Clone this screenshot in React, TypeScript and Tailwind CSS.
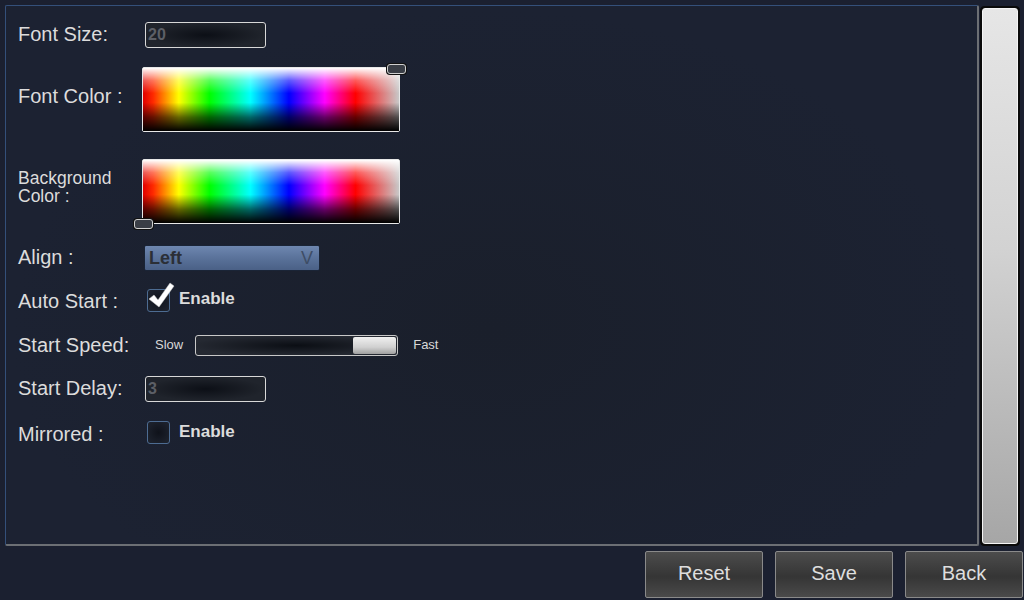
import React from 'react';

const hue =
  'bg-[linear-gradient(to_right,#e00000_0%,#ff2a00_4%,#ffff00_14%,#00ff00_26%,#00ffff_42%,#0000ff_57%,#ff00ff_71%,#ff0000_83%,#c8c8c8_100%)]';
const shade =
  'bg-[linear-gradient(to_bottom,#ffffff_0%,rgba(255,255,255,0.35)_20%,rgba(255,255,255,0)_40%,rgba(0,0,0,0)_55%,rgba(0,0,0,0.6)_78%,#000000_100%)]';

const Label = ({ children, className = 'text-[20px] leading-none' }: { children: React.ReactNode; className?: string }) => (
  <div className={`w-[124px] shrink-0 text-[#dcdcdc] ${className}`}>{children}</div>
);

const TextBox = ({ value }: { value: string }) => (
  <div className="ml-[3px] w-[121px] h-[26px] rounded-[3px] border border-[#d8d8d8] bg-[radial-gradient(ellipse_at_center,#0c0f16_0%,#20242c_70%)] flex items-center px-[2px]">
    <span className="text-[16px] font-bold text-[#5c5f66]">{value}</span>
  </div>
);

const Thumb = ({ className }: { className: string }) => (
  <div className={`absolute w-[19px] h-[10px] rounded-[3px] border border-[#d0d0d0] bg-[#3a3e46] shadow-[0_0_0_1px_#111] ${className}`} />
);

const Picker = ({ thumb }: { thumb: string }) => (
  <div className="relative w-[258px] h-[65px]">
    <div className={`w-full h-full border border-[#e8e8e8] rounded-[2px] ${hue}`}>
      <div className={`w-full h-full ${shade}`} />
    </div>
    <Thumb className={thumb} />
  </div>
);

const Check = ({ checked }: { checked: boolean }) => (
  <div className="relative ml-[5px] w-[23px] h-[23px] rounded-[3px] border border-[#4d6c92] bg-[radial-gradient(circle,#0f121a_0%,#1c212c_80%)]">
    {checked && (
      <svg className="absolute -top-[9px] -left-[1px]" width="28" height="30" viewBox="0 0 28 30">
        <path d="M2 18 L7 14 L11 19 L23 2 L27 5 L12 26 Z" fill="#ffffff" stroke="#cfcfcf" strokeWidth="0.5" />
      </svg>
    )}
  </div>
);

const Btn = ({ children }: { children: React.ReactNode }) => (
  <div className="w-[118px] h-[47px] pb-[3px] rounded-[2px] border border-[#8a8a8a] bg-[linear-gradient(to_bottom,#4c4c4c_0%,#353535_55%,#4a4a4a_100%)] flex items-center justify-center text-[20px] text-[#dedede]">
    {children}
  </div>
);

export default function App() {
  return (
    <div className="w-[1024px] h-[600px] bg-[#1b2030] font-['Liberation_Sans',Arial,sans-serif] overflow-hidden flex flex-col">
      <div className="flex pt-[5px] pl-[5px] h-[546px]">
        <div className="w-[974px] h-[541px] rounded-[2px] border-t border-l border-t-[#34507a] border-l-[#34507a] border-b-2 border-r-2 border-b-[#6c6f74] border-r-[#6c6f74] bg-[radial-gradient(ellipse_at_50%_60%,#1a1f2b_0%,#1c2232_70%)] pl-[12px] flex flex-col">
          {/* Font size */}
          <div className="mt-[14px] h-[30px] flex items-center">
            <Label className="text-[20px] leading-none -mt-[2px]">Font Size:</Label>
            <TextBox value="20" />
          </div>

          {/* Font color */}
          <div className="mt-[17px] h-[65px] flex items-center">
            <Label className="text-[20px] leading-none -mt-[8px]">Font Color :</Label>
            <Picker thumb="-top-[3px] right-[-6px]" />
          </div>

          {/* Background color */}
          <div className="mt-[26px] h-[66px] flex items-center">
            <Label className="text-[17.5px] leading-[18px] -mt-[8px]">
              Background
              <br />
              Color :
            </Label>
            <Picker thumb="-bottom-[5px] -left-[8px]" />
          </div>

          {/* Align */}
          <div className="mt-[21px] h-[26px] flex items-center">
            <Label className="text-[20px] leading-none -mt-[3px]">Align :</Label>
            <div className="ml-[2px] w-[176px] h-[26px] rounded-[2px] border border-[#1a2436] bg-[linear-gradient(to_bottom,#6e87b0_0%,#5a729a_50%,#4a6086_100%)] flex items-center justify-between px-[4px]">
              <span className="text-[18px] font-bold text-[#2b2f36]">Left</span>
              <span className="text-[18px] text-[#3e4d66] mr-[2px]">V</span>
            </div>
          </div>

          {/* Auto start */}
          <div className="mt-[17px] h-[24px] flex items-center">
            <Label className="text-[20px] leading-none mt-[2px]">Auto Start :</Label>
            <Check checked />
            <span className="ml-[9px] text-[17px] font-bold text-[#dcdcdc] -mt-[2px]">Enable</span>
          </div>

          {/* Start speed */}
          <div className="mt-[22px] h-[22px] flex items-center">
            <Label>Start Speed:</Label>
            <span className="ml-[13px] text-[13px] text-[#d8d8d8]">Slow</span>
            <div className="ml-[12px] w-[203px] h-[21px] rounded-[3px] border border-[#c8c8c8] bg-[radial-gradient(ellipse_at_center,#0b0e14_0%,#252932_75%)] flex justify-end p-[1px]">
              <div className="w-[43px] h-full rounded-[2px] bg-[linear-gradient(to_bottom,#f0f0f0_0%,#d0d0d0_60%,#a0a0a0_100%)]" />
            </div>
            <span className="ml-[15px] text-[13px] text-[#d8d8d8]">Fast</span>
          </div>

          {/* Start delay */}
          <div className="mt-[20px] h-[26px] flex items-center">
            <Label className="text-[20px] leading-none -mt-[2px]">Start Delay:</Label>
            <TextBox value="3" />
          </div>

          {/* Mirrored */}
          <div className="mt-[18px] h-[24px] flex items-center">
            <Label className="text-[20px] leading-none mt-[3px]">Mirrored :</Label>
            <Check checked={false} />
            <span className="ml-[9px] text-[17px] font-bold text-[#dcdcdc]">Enable</span>
          </div>
        </div>

        {/* Scrollbar */}
        <div className="ml-[1px] mt-[1px] w-[40px] h-[540px] rounded-[4px] border border-[#0a0a0a] p-[1px] bg-[#0a0a0a]">
          <div className="w-full h-full rounded-[3px] border border-[#f4f4f4] bg-[linear-gradient(to_bottom,#e6e6e6_0%,#d2d2d2_45%,#a6a6a6_100%)]" />
        </div>
      </div>

      {/* Bottom buttons */}
      <div className="flex justify-end gap-[12px] pr-[1px] mt-[5px]">
        <Btn>Reset</Btn>
        <Btn>Save</Btn>
        <Btn>Back</Btn>
      </div>
    </div>
  );
}
